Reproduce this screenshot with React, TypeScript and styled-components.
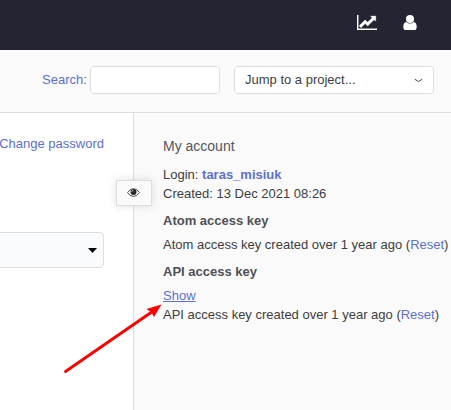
import React from "react";
import styled, { createGlobalStyle } from "styled-components";

const GlobalStyle = createGlobalStyle`
  * { box-sizing: border-box; }
  body { margin: 0; background: #fff; overflow: hidden; }
`;

const Page = styled.div`
  position: relative;
  display: flex;
  flex-direction: column;
  width: 451px;
  height: 410px;
  overflow: hidden;
  color: #3d3d40;
  font: 13px/19px "Liberation Sans", Arial, sans-serif;
`;

const TopBar = styled.header`
  display: flex;
  flex: none;
  align-items: flex-start;
  justify-content: flex-end;
  gap: 26px;
  height: 50px;
  padding: 15px 34px 0 0;
  background: #242532;
  color: #fff;
`;

const Toolbar = styled.div`
  display: flex;
  flex: none;
  align-items: flex-start;
  height: 63px;
  padding: 16px 17px 0 42px;
  background: #fafafa;
  border-bottom: 1px solid #dcdee2;
`;

const SearchLabel = styled.label`
  width: 48px;
  line-height: 27px;
  color: #66676c;
  white-space: nowrap;
`;

const SearchInput = styled.input`
  width: 130px;
  height: 28px;
  border: 1px solid #dcdee4;
  border-radius: 4px;
  background: #fff;
  outline: none;
`;

const ProjectSelect = styled.div`
  display: flex;
  align-items: center;
  justify-content: space-between;
  width: 200px;
  height: 28px;
  margin-left: 14px;
  padding: 0 10px 1px;
  border: 1px solid #dcdee4;
  border-radius: 4px;
  background: #fff;
`;

const ChevronIcon = styled.svg`
  position: relative;
  top: 1px;
`;

const Body = styled.div`
  display: flex;
  flex: 1;
  min-height: 0;
`;

const Content = styled.main`
  display: flex;
  flex-direction: column;
  align-items: flex-end;
  width: 133px;
  padding: 21px 29px 0 0;
`;

const Dropdown = styled.div`
  display: flex;
  align-items: center;
  justify-content: flex-end;
  width: 124px;
  height: 36px;
  margin-top: 79px;
  padding-right: 6px;
  border: 1px solid #dcdee4;
  border-radius: 4px;
  background: #fafbfd;
`;

const Sidebar = styled.aside`
  position: relative;
  flex: 1;
  padding: 22px 0 0 29px;
  background: #fafafa;
  border-left: 1px solid #dcdee2;
  white-space: nowrap;
`;

const Toggle = styled.button`
  position: absolute;
  top: 67px;
  left: -18px;
  display: flex;
  align-items: center;
  justify-content: center;
  width: 36px;
  height: 26px;
  padding: 0 1px 1px 0;
  border: 1px solid #dcdde3;
  background: #fafafa;
  box-shadow: 0 0 10px rgba(0, 0, 0, 0.13);
`;

const Title = styled.h3`
  margin: 0 0 8px;
  color: #55555a;
  font-size: 14px;
  font-weight: 400;
  line-height: 22px;
`;

const Heading = styled.h4`
  margin: 8px 0 5px;
  color: #505055;
  font-size: 13px;
  font-weight: 700;
  line-height: 19px;
`;

const Line = styled.p`
  margin: 0;
`;

const Link = styled.a<{ $bold?: boolean; $underline?: boolean }>`
  color: #5c6fd3;
  font-weight: ${(p) => (p.$bold ? 700 : 400)};
  text-decoration: ${(p) => (p.$underline ? "underline" : "none")};
  white-space: nowrap;
`;

const Arrow = styled.svg`
  position: absolute;
  left: 60px;
  top: 300px;
  pointer-events: none;
`;

const ChartIcon = () => (
  <svg width="20" height="15" viewBox="0 0 2048 1536" fill="currentColor" stroke="currentColor" strokeWidth="40">
    <path d="M2048 1408v128h-2048v-1536h128v1408h1920zM1920 144v435q0 21-19.5 29.5t-35.5-7.5l-121-121-633 633q-10 10-23 10t-23-10l-233-233-416 416-192-192l585-585q10-10 23-10t23 10l233 233 464-464-121-121q-16-16-7.5-35.5t29.5-19.5h435q14 0 23 9t9 23z" />
  </svg>
);

const UserIcon = () => (
  <svg width="14" height="15" viewBox="0 0 14 15" fill="currentColor">
    <circle cx="7" cy="4" r="4" />
    <path d="M3.300 6.900Q4.900 8.600 7 8.600t3.700-1.700c2 .1 3 2.200 3 5 0 1.900-.9 3.100-2.300 3.100H2.600C1.200 15 .3 13.800.3 11.900c0-2.800 1-4.900 3-5z" />
  </svg>
);

const EyeIcon = () => (
  <svg width="13" height="9" viewBox="0 0 13 9">
    <path d="M.5 4.600Q3 .7 6.500.7t6 3.900Q10 8.400 6.500 8.400T.5 4.600z" fill="#fafafa" stroke="#3a3b3f" strokeWidth=".9" />
    <circle cx="6.500" cy="3.900" r="3" fill="#25272a" />
    <path d="M4.800 3.800Q5 2.400 6.300 2.200" fill="none" stroke="#fafafa" strokeWidth=".8" />
  </svg>
);

export default function App() {
  return (
    <Page>
      <GlobalStyle />
      <TopBar>
        <ChartIcon />
        <UserIcon />
      </TopBar>
      <Toolbar>
        <SearchLabel htmlFor="search"><Link>Search</Link>:</SearchLabel>
        <SearchInput id="search" />
        <ProjectSelect>
          Jump to a project...
          <ChevronIcon width="9" height="5" viewBox="0 0 9 5">
            <path d="M.7 1.200 4.500 3.500 8.300 1.200" fill="none" stroke="#444" />
          </ChevronIcon>
        </ProjectSelect>
      </Toolbar>
      <Body>
        <Content>
          <Link>Change password</Link>
          <Dropdown>
            <svg width="9" height="5" viewBox="0 0 9 5">
              <path d="M0 0h9L4.500 5z" fill="#000" />
            </svg>
          </Dropdown>
        </Content>
        <Sidebar>
          <Toggle aria-label="Toggle sidebar"><EyeIcon /></Toggle>
          <Title>My account</Title>
          <Line>Login: <Link $bold>taras_misiuk</Link></Line>
          <Line>Created: 13 Dec 2021 08:26</Line>
          <Heading>Atom access key</Heading>
          <Line>Atom access key created over 1 year ago (<Link>Reset</Link>)</Line>
          <Heading>API access key</Heading>
          <Line><Link $underline>Show</Link></Line>
          <Line>API access key created over 1 year ago (<Link>Reset</Link>)</Line>
        </Sidebar>
      </Body>
      <Arrow width="105" height="80" viewBox="60 300 105 80">
        <path d="M65.500 371.500 151 312.500" fill="none" stroke="#f00" strokeWidth="2.900" strokeLinecap="round" />
        <path d="M161.500 304.500 154 317 151.500 312.500 146.500 309z" fill="#f00" />
      </Arrow>
    </Page>
  );
}
